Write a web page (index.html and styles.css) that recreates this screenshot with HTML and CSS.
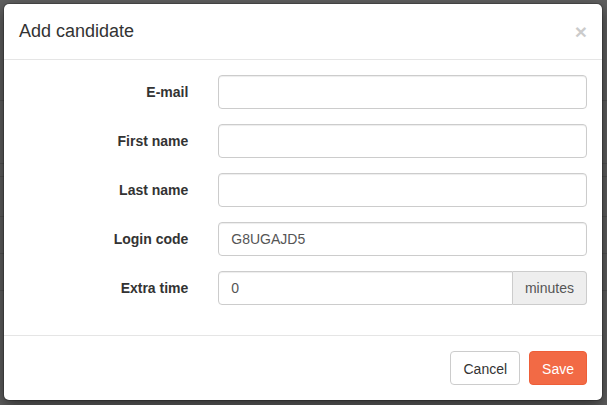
FILE: index.html
```html
<!DOCTYPE html>
<html lang="en">
<head>
<meta charset="utf-8">
<title>Add candidate</title>
<link rel="stylesheet" href="styles.css">
</head>
<body>
<div class="page">
  <div class="page-row r1"></div>
  <div class="page-row r2"></div>
  <div class="page-row r3"></div>
  <div class="page-row r4"></div>
  <div class="page-row r5"></div>
</div>
<div class="backdrop"></div>
<div class="modal">
  <div class="modal-header">
    <button class="close" type="button">&times;</button>
    <h4 class="modal-title">Add candidate</h4>
  </div>
  <form class="modal-body">
    <div class="form-group">
      <label class="control-label">E-mail</label>
      <div class="control"><input class="form-control" type="text"></div>
    </div>
    <div class="form-group">
      <label class="control-label">First name</label>
      <div class="control"><input class="form-control" type="text"></div>
    </div>
    <div class="form-group">
      <label class="control-label">Last name</label>
      <div class="control"><input class="form-control" type="text"></div>
    </div>
    <div class="form-group">
      <label class="control-label">Login code</label>
      <div class="control"><input class="form-control" type="text" value="G8UGAJD5"></div>
    </div>
    <div class="form-group">
      <label class="control-label">Extra time</label>
      <div class="control">
        <div class="input-group">
          <input class="form-control grouped" type="text" value="0">
          <span class="addon">minutes</span>
        </div>
      </div>
    </div>
  </form>
  <div class="modal-footer">
    <button class="btn btn-default" type="button">Cancel</button>
    <button class="btn btn-save" type="button">Save</button>
  </div>
</div>
</body>
</html>
```

FILE: styles.css
```css
* { box-sizing: border-box; }
html, body {
  margin: 0;
  padding: 0;
  width: 607px;
  height: 405px;
  overflow: hidden;
}
body {
  position: relative;
  background: #ffffff;
  font-family: "Liberation Sans", Arial, Helvetica, sans-serif;
  font-size: 14px;
  line-height: 1.42857;
  color: #333;
}
.page {
  padding-top: 100px;
}
.page-row {
  border-top: 1px solid #ddd;
}
.r1 { height: 63px; }
.r2 { height: 13px; }
.r3 { height: 40px; }
.r4 { height: 37px; }
.r5 { height: 38px; border-bottom: 1px solid #ddd; }

.backdrop {
  position: absolute;
  inset: 0;
  background: rgba(0, 0, 0, 0.62);
}

.modal {
  position: absolute;
  left: 3px;
  top: 3px;
  width: 600px;
  background: #fff;
  border: 1px solid rgba(0, 0, 0, 0.2);
  border-radius: 6px;
  box-shadow: 0 5px 15px rgba(0, 0, 0, 0.5);
  background-clip: padding-box;
}
.modal-header {
  padding: 15px;
  border-bottom: 1px solid #e5e5e5;
  display: flex;
  flex-direction: row-reverse;
  justify-content: space-between;
  align-items: flex-start;
}
.modal-title {
  margin: 0;
  font-size: 18px;
  font-weight: 500;
  line-height: 25px;
  color: #333;
}
.close {
  padding: 0;
  margin-top: 2px;
  border: 0;
  background: transparent;
  font-family: "Liberation Sans", Arial, sans-serif;
  font-size: 21px;
  font-weight: bold;
  line-height: 1;
  color: #000;
  opacity: 0.2;
}
.modal-body {
  margin: 0;
  padding: 15px;
}
.form-group {
  display: flex;
  margin: 0 -15px 15px;
}
.control-label {
  flex: 0 0 33.3333%;
  padding: 8px 15px 0;
  text-align: right;
  font-weight: bold;
}
.control {
  flex: 0 0 66.6667%;
  padding: 0 15px;
}
.form-control {
  display: block;
  width: 100%;
  height: 34px;
  padding: 6px 12px;
  font-family: inherit;
  font-size: 14px;
  line-height: 1.42857;
  color: #555;
  background: #fff;
  border: 1px solid #ccc;
  border-radius: 4px;
  box-shadow: inset 0 1px 1px rgba(0, 0, 0, 0.075);
}
.input-group {
  display: flex;
}
.form-control.grouped {
  flex: 1 1 auto;
  min-width: 0;
  border-radius: 4px 0 0 4px;
}
.addon {
  flex: 0 0 auto;
  padding: 6px 12px;
  font-size: 14px;
  line-height: 20px;
  color: #555;
  background: #eee;
  border: 1px solid #ccc;
  border-left: 0;
  border-radius: 0 4px 4px 0;
  white-space: nowrap;
}
.modal-footer {
  padding: 15px;
  border-top: 1px solid #e5e5e5;
  display: flex;
  justify-content: flex-end;
  gap: 9px;
}
.btn {
  height: 34px;
  padding: 7px 12px 5px;
  font-family: inherit;
  font-size: 14px;
  line-height: 20px;
  border: 1px solid transparent;
  border-radius: 4px;
}
.btn-default {
  color: #333;
  background: #fff;
  border-color: #ccc;
}
.btn-save {
  color: #fff;
  background: #f26a45;
  border-color: #ee5e38;
}
```
